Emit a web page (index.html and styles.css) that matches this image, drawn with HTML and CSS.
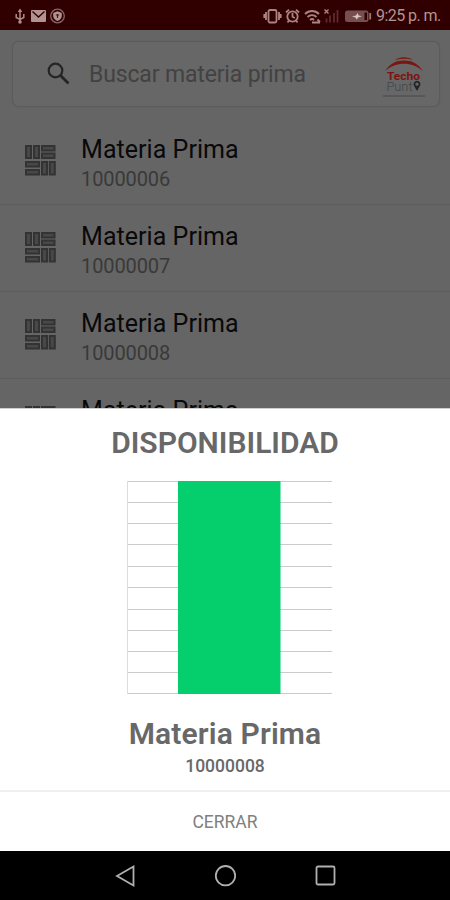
FILE: index.html
```html
<!DOCTYPE html>
<html lang="es">
<head>
    <meta charset="UTF-8" />
    <meta name="viewport" content="width=device-width, initial-scale=1" />
    <title>Materia Prima</title>
    <link rel="stylesheet" href="styles.css">
</head>
<body>
    <svg class="defs" width="0" height="0">
        <symbol id="bricks" viewBox="0 0 32 32">
            <g fill="#484848" stroke="#333" stroke-width="2">
                <rect x="2" y="2" width="5" height="12" />
                <rect x="10" y="2" width="5" height="12" />
                <rect x="18" y="2" width="12.500" height="4.500" />
                <rect x="18" y="9.500" width="12.500" height="4.500" />
                <rect x="2" y="18" width="13" height="4.500" />
                <rect x="2" y="26" width="13" height="4.500" />
                <rect x="18" y="18" width="5" height="12.500" />
                <rect x="25.800" y="18" width="5" height="12.500" />
            </g>
        </symbol>
    </svg>
    <div class="screen">
        <header class="status-bar">
            <svg class="status-icons" width="54" height="20" viewBox="0 0 54 20">
                <g fill="none" stroke="#b08b8b" stroke-width="1.5">
                    <path d="M6 5v12M2.200 8v3.500L6 13.500l3.800-2V8" />
                    <circle cx="43.500" cy="10" r="6.800" stroke="#8c6666" stroke-width="1.300" />
                </g>
                <path d="M6 2.500l2.300 3.500H3.700z" fill="#b08b8b" />
                <circle cx="6" cy="16" r="1.800" fill="#b08b8b" />
                <rect x="17" y="4" width="15" height="12" rx="1" fill="#b39292" />
                <path d="M18.500 5.500l6 5.500 6-5.500" fill="none" stroke="#300000" stroke-width="1.400" />
                <path d="M43.500 5.300l4.300 1.600v3.200c0 2.400-2 4.200-4.300 5-2.300-.8-4.300-2.600-4.300-5V6.900z" fill="#b39292" />
                <path d="M43.500 8v4M41.800 9h3.400" stroke="#4a1515" stroke-width="1.200" />
            </svg>
            <div class="status-right">
                <svg width="109" height="20" viewBox="0 0 109 20">
                    <g fill="none" stroke="#aa8383" stroke-width="1.800">
                        <rect x="5.500" y="4" width="8" height="12.500" rx="1.500" />
                        <path d="M3 6v8M16 6v8M1.300 8v4M17.700 8v4" />
                        <circle cx="29.500" cy="10.500" r="5.200" />
                        <path d="M29.500 7v3.800l2.300 1.200M23 6.500l3-2.800M36 6.500l-3-2.800M26 14.500l-1.500 2M33 14.500l1.500 2" />
                        <path d="M42 8c4-4 10-4 14 0M44.500 11c2.600-2.600 6.400-2.600 9 0M47 14c1.400-1.300 2.700-1.300 4 0M49 16.500h8M54.500 13.500l2.500 2.500" />
                        <path d="M61.500 3.500l4 4M65.500 3.500l-4 4" stroke-width="1.400" />
                    </g>
                    <path d="M63.500 16.500v-4M67 16.500v-7M71 16.500V7M74.500 16.500V4" stroke="#602c2c" stroke-width="1.700" />
                    <rect x="82" y="4.500" width="23.500" height="11.500" rx="2.500" fill="#765050" />
                    <path d="M101.500 6.500h2.500v7.500h-2.500z" fill="#300000" />
                    <path d="M107.200 7v6.500" stroke="#9a7777" stroke-width="1.800" />
                    <path d="M89 10.500l4-1 1.500-2.500 1.200 2.600 3.300.7-4 1.200-1.200 2.200-1.300-2.300z" fill="#dcc4c4" />
                </svg>
                <span class="clock">9:25 p. m.</span>
            </div>
        </header>

        <main class="app">
            <div class="search">
                <svg width="24" height="24" viewBox="0 0 24 24" fill="none" stroke="#252525" stroke-width="2.200">
                    <circle cx="8.500" cy="8.500" r="6.800" />
                    <path d="M13.500 13.500l8 8" stroke-width="2.800" />
                </svg>
                <span class="placeholder">Buscar materia prima</span>
                <svg class="logo" width="46" height="46" viewBox="0 0 46 46">
                    <path d="M2 45h42" stroke="#525252" stroke-width="1.400" />
                    <path d="M4 20C9 12.500 15 9.500 23 9.500S37 12.500 42 20C36 14.800 30 12.800 23 12.800S10 14.800 4 20z" fill="#7c1410" />
                    <path d="M14 9C19 5.300 27 5.300 32 9C27 7.400 20 7.400 14 9z" fill="#7c1410" />
                    <text x="6" y="28.500" class="logo-top" textLength="33" lengthAdjust="spacingAndGlyphs">Techo</text>
                    <text x="5.500" y="39.500" class="logo-bottom" textLength="26" lengthAdjust="spacingAndGlyphs">Punt</text>
                    <path d="M36 40l-2.700-4.800a3.300 3.300 0 1 1 5.400 0z" fill="#242424" />
                    <circle cx="36" cy="33.200" r="1.600" fill="#676767" />
                </svg>
            </div>

            <ul class="list">
                <li class="item">
                    <svg width="32" height="32"><use href="#bricks" /></svg>
                    <div>
                        <div class="name">Materia Prima</div>
                        <div class="code">10000006</div>
                    </div>
                </li>
                <li class="item">
                    <svg width="32" height="32"><use href="#bricks" /></svg>
                    <div>
                        <div class="name">Materia Prima</div>
                        <div class="code">10000007</div>
                    </div>
                </li>
                <li class="item">
                    <svg width="32" height="32"><use href="#bricks" /></svg>
                    <div>
                        <div class="name">Materia Prima</div>
                        <div class="code">10000008</div>
                    </div>
                </li>
                <li class="item">
                    <svg width="32" height="32"><use href="#bricks" /></svg>
                    <div>
                        <div class="name">Materia Prima</div>
                    </div>
                </li>
            </ul>
        </main>

        <section class="sheet">
            <div class="sheet-body">
                <h1>DISPONIBILIDAD</h1>
                <svg class="chart" width="206" height="214" viewBox="0 0 206 214">
                    <path d="M0 .5h205M0 21.500h205M0 42.500h205M0 63.500h205M0 85.500h205M0 106.500h205M0 128.500h205M0 149.500h205M0 170.500h205M0 191.500h205M0 212.500h205" stroke="#cbcbcb" />
                    <path d="M.5 0v213" stroke="#dcdcdc" />
                    <rect x="51" y="0" width="102.500" height="213" fill="#05ce6c" />
                </svg>
                <h2>Materia Prima</h2>
                <div class="sheet-code">10000008</div>
            </div>
            <button class="close">CERRAR</button>
        </section>

        <nav class="nav-bar">
            <svg width="22" height="24" viewBox="0 0 22 24"><path d="M19.500 2.500v19L3 12z" /></svg>
            <svg width="22" height="24" viewBox="0 0 22 24"><circle cx="11.500" cy="11.700" r="9.700" /></svg>
            <svg width="22" height="24" viewBox="0 0 22 24"><rect x="2.500" y="2.500" width="18" height="18" rx="1.500" /></svg>
        </nav>
    </div>
</body>
</html>
```
FILE: styles.css
```css
* {
    box-sizing: border-box;
}
body {
    margin: 0;
    font-family: Roboto, sans-serif;
    background: #000;
}
.defs {
    display: block;
}
.screen {
    display: flex;
    flex-direction: column;
    width: 450px;
    height: 900px;
    overflow: hidden;
}

/* Status bar */
.status-bar {
    display: flex;
    justify-content: space-between;
    align-items: center;
    height: 30px;
    padding: 2px 9px 0 14px;
    background: #300000;
}
.status-right {
    display: flex;
    align-items: center;
    gap: 4px;
}
.clock {
    width: 65px;
    font-size: 16px;
    line-height: 20px;
    letter-spacing: -0.55px;
    white-space: nowrap;
    color: #b29494;
}

/* Search and list */
.app {
    height: 378px;
    overflow: hidden;
    background: #656565;
}
.search {
    display: flex;
    align-items: center;
    height: 64px;
    margin: 12px 11px 12px 13px;
    padding: 0 12px 0 34px;
    border-radius: 5px;
    background: #676767;
    box-shadow: 0 0 2px rgba(0,0,0,0.35);
}
.placeholder {
    flex: 1;
    margin-left: 18px;
    padding-top: 2px;
    font-size: 23px;
    line-height: 30px;
    letter-spacing: -0.15px;
    color: #424242;
}
.logo-top {
    font-size: 11px;
    font-weight: 700;
    fill: #7c1410;
}
.logo-bottom {
    font-size: 12px;
    font-weight: 300;
    fill: #3f4545;
}
.list {
    list-style: none;
    margin: 0;
    padding: 0;
}
.item {
    display: flex;
    gap: 25px;
    height: 87px;
    padding: 16px 24px 0;
    border-bottom: 1px solid #5d5d5d;
}
.item svg {
    margin-top: 10px;
}
.name {
    font-size: 25px;
    line-height: 31px;
    letter-spacing: 0.05px;
    color: #090909;
}
.code {
    font-size: 20px;
    line-height: 28px;
    letter-spacing: -0.1px;
    color: #393939;
}

/* Bottom sheet */
.sheet {
    height: 443px;
    border-top: 1px solid #cfcfcf;
    background: #fff;
    color: #686868;
    text-align: center;
}
.sheet-body {
    display: flex;
    flex-direction: column;
    align-items: center;
    height: 383px;
    padding-top: 16px;
    border-bottom: 2px solid #efefef;
}
.sheet h1,
.sheet h2 {
    margin: 0;
    font-size: 30px;
    line-height: 36px;
    font-weight: 600;
}
.sheet h2 {
    letter-spacing: 0.15px;
}
.chart {
    margin: 20px 0 21px;
    margin-left: 9px;
}
.sheet-code {
    margin-top: 3px;
    font-size: 17.500px;
    line-height: 22px;
    font-weight: 500;
}
.close {
    width: 100%;
    height: 59px;
    padding: 1px 0 0;
    border: none;
    background: none;
    font-family: inherit;
    font-size: 17.500px;
    color: #808080;
}

/* Navigation bar */
.nav-bar {
    display: flex;
    justify-content: center;
    align-items: center;
    gap: 78px;
    height: 49px;
    background: #000;
}
.nav-bar svg {
    fill: none;
    stroke: #b0b0b0;
    stroke-width: 1.8;
}
```
